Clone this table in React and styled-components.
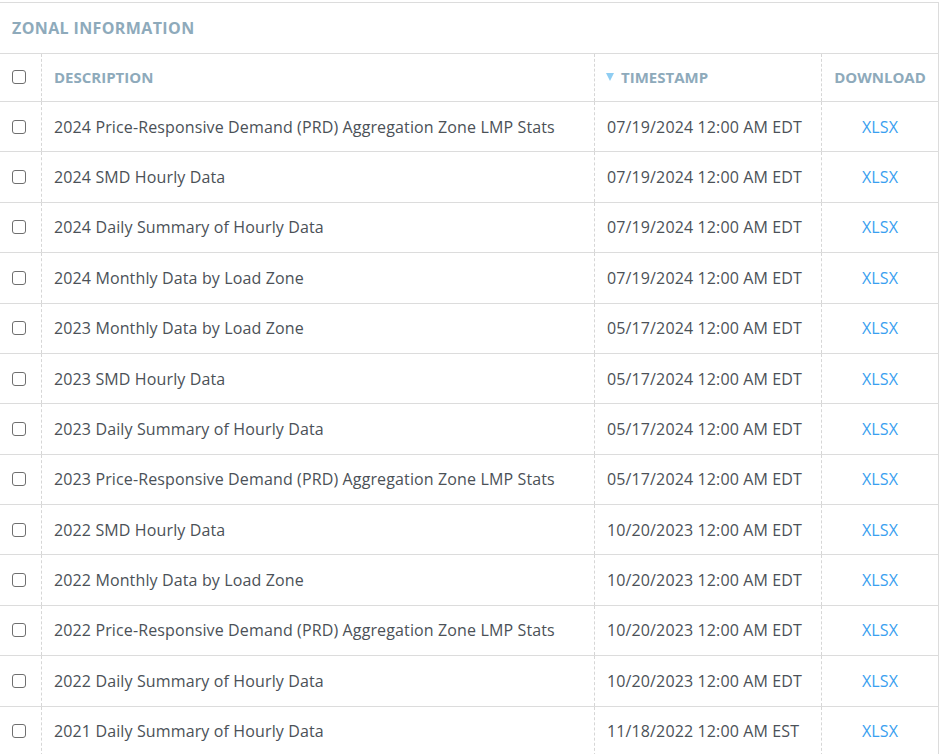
import React from "react";
import styled, { createGlobalStyle } from "styled-components";

const Global = createGlobalStyle`
  html, body { margin: 0; padding: 0; background: #fff; }
  body { font-family: "Open Sans", "Liberation Sans", sans-serif; overflow: hidden; }
`;

const Panel = styled.section`
  margin-top: 2px;
  width: 939px;
  box-sizing: border-box;
  border-top: 1px solid #dcdcdc;
  border-right: 1px solid #dcdcdc;
  background: #fff;
`;

const Title = styled.h2`
  margin: 0;
  height: 51px;
  box-sizing: border-box;
  border-bottom: 1px solid #dcdcdc;
  padding-left: 12px;
  display: flex;
  align-items: center;
  font-size: 16px;
  font-weight: 700;
  color: #8eaabb;
  letter-spacing: 0.38px;
`;

const Row = styled.div`
  display: grid;
  grid-template-columns: 41px 553px 227px 117px;
  height: ${(p) => (p.$header ? "48px" : "50.38px")};
  box-sizing: border-box;
  border-bottom: 1px solid #dcdcdc;
`;

const Cell = styled.div`
  display: flex;
  align-items: center;
  justify-content: ${(p) => (p.$center ? "center" : "flex-start")};
  padding-left: ${(p) => (p.$center || p.$first ? "0" : "12px")};
  border-left: ${(p) => (p.$first ? "none" : "1px dashed #d6d6d6")};
  font-size: 16px;
  letter-spacing: 0.13px;
  color: #4b5157;
  white-space: nowrap;
  overflow: hidden;
`;

const HeadCell = styled(Cell)`
  font-size: 15px;
  letter-spacing: 0;
  font-weight: 700;
  color: #8eaabb;
  padding-bottom: 2px;
  padding-left: ${(p) => (p.$center || p.$first ? "0" : p.$sorted ? "11px" : "12px")};
`;

const Box = styled.span`
  flex-shrink: 0;
  width: 14px;
  height: 14px;
  box-sizing: border-box;
  border: 1.5px solid #6f6f6f;
  border-radius: 3px;
  background: #fff;
  margin-left: 12px;
`;

const SortArrow = styled.span`
  flex-shrink: 0;
  width: 0;
  height: 0;
  border-left: 4.5px solid transparent;
  border-right: 4.5px solid transparent;
  border-top: 8px solid #8fcdf2;
  margin-right: 7px;
`;

const Link = styled.a`
  color: #3a9ff0;
  text-decoration: none;
`;

const rows = [
  ["2024 Price-Responsive Demand (PRD) Aggregation Zone LMP Stats", "07/19/2024 12:00 AM EDT"],
  ["2024 SMD Hourly Data", "07/19/2024 12:00 AM EDT"],
  ["2024 Daily Summary of Hourly Data", "07/19/2024 12:00 AM EDT"],
  ["2024 Monthly Data by Load Zone", "07/19/2024 12:00 AM EDT"],
  ["2023 Monthly Data by Load Zone", "05/17/2024 12:00 AM EDT"],
  ["2023 SMD Hourly Data", "05/17/2024 12:00 AM EDT"],
  ["2023 Daily Summary of Hourly Data", "05/17/2024 12:00 AM EDT"],
  ["2023 Price-Responsive Demand (PRD) Aggregation Zone LMP Stats", "05/17/2024 12:00 AM EDT"],
  ["2022 SMD Hourly Data", "10/20/2023 12:00 AM EDT"],
  ["2022 Monthly Data by Load Zone", "10/20/2023 12:00 AM EDT"],
  ["2022 Price-Responsive Demand (PRD) Aggregation Zone LMP Stats", "10/20/2023 12:00 AM EDT"],
  ["2022 Daily Summary of Hourly Data", "10/20/2023 12:00 AM EDT"],
  ["2021 Daily Summary of Hourly Data", "11/18/2022 12:00 AM EST"],
];

export default function App() {
  return (
    <>
      <Global />
      <Panel>
        <Title>ZONAL INFORMATION</Title>
        <Row $header>
          <HeadCell $first>
            <Box />
          </HeadCell>
          <HeadCell>DESCRIPTION</HeadCell>
          <HeadCell $sorted>
            <SortArrow />
            TIMESTAMP
          </HeadCell>
          <HeadCell $center>DOWNLOAD</HeadCell>
        </Row>
        {rows.map(([desc, ts], i) => (
          <Row key={i}>
            <Cell $first>
              <Box />
            </Cell>
            <Cell>{desc}</Cell>
            <Cell>{ts}</Cell>
            <Cell $center>
              <Link href="#">XLSX</Link>
            </Cell>
          </Row>
        ))}
      </Panel>
    </>
  );
}
